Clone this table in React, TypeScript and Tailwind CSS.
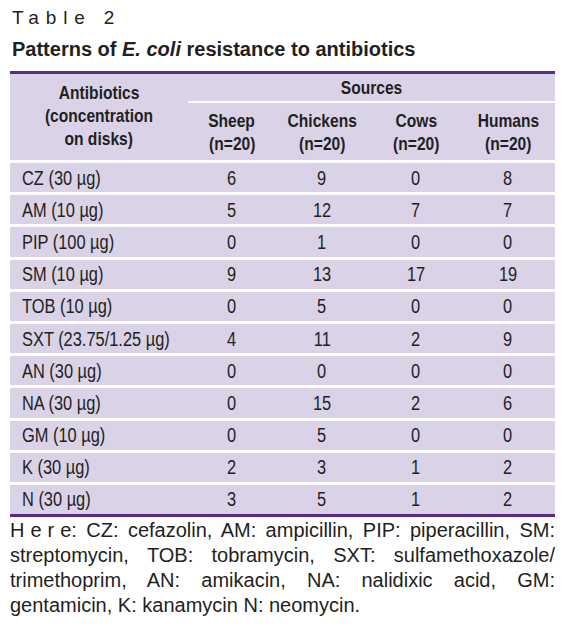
const rows: [string, string, string, string, string][] = [
  ["CZ (30 µg)", "6", "9", "0", "8"],
  ["AM (10 µg)", "5", "12", "7", "7"],
  ["PIP (100 µg)", "0", "1", "0", "0"],
  ["SM (10 µg)", "9", "13", "17", "19"],
  ["TOB (10 µg)", "0", "5", "0", "0"],
  ["SXT (23.75/1.25 µg)", "4", "11", "2", "9"],
  ["AN (30 µg)", "0", "0", "0", "0"],
  ["NA (30 µg)", "0", "15", "2", "6"],
  ["GM (10 µg)", "0", "5", "0", "0"],
  ["K (30 µg)", "2", "3", "1", "2"],
  ["N (30 µg)", "3", "5", "1", "2"],
];

const sources = ["Sheep", "Chickens", "Cows", "Humans"];
// widths of the four source columns
const colW = ["w-[88px]", "w-[92px]", "w-[96px]", "flex-1 pr-[3px]"];

// no narrow face installed, so squeeze Liberation Sans to the width of Arial Narrow
const narrow = "inline-block whitespace-nowrap scale-x-[0.82]";

export default function App() {
  return (
    <div className="w-[565px] min-h-[632px] bg-white px-[10px] pt-[6px] text-[#231f20] font-['Liberation_Sans',Arial,sans-serif]">
      <div className="h-[24px] pl-[2px] text-[19px] leading-[24px] tracking-[0.36em]">Table 2</div>
      <h2 className="mt-[7px] pl-[2px] text-[20px] font-bold leading-[24px]">
        Patterns of <i>E. coli</i> resistance to antibiotics
      </h2>

      <div className="mt-[10px] border-t-[3px] border-b-[3px] border-[#5b2c83] bg-[#dad3e7]">
        {/* header */}
        <div className="flex h-[86px] font-bold text-[19px] leading-[23px]">
          <div className="flex w-[178px] flex-col items-center justify-center pb-[4px] text-center">
            <span className={narrow}>Antibiotics</span>
            <span className={narrow}>(concentration</span>
            <span className={narrow}>on disks)</span>
          </div>
          <div className="flex flex-1 flex-col">
            <div className="flex h-[27px] items-center justify-center">
              <span className={narrow}>Sources</span>
            </div>
            <div className="h-[2px] bg-white" />
            <div className="flex flex-1">
              {sources.map((s, i) => (
                <div key={s} className={`${colW[i]} flex flex-col items-center justify-center text-center`}>
                  <span className={narrow}>{s}</span>
                  <span className={narrow}>(n=20)</span>
                </div>
              ))}
            </div>
          </div>
        </div>

        {/* body */}
        {rows.map((r) => (
          <div key={r[0]} className="flex h-[32.2px] items-center border-t-[3px] border-white text-[20px] leading-[24px]">
            <div className="w-[178px] pl-[12px]">
              <span className={`${narrow} origin-left`}>{r[0]}</span>
            </div>
            {r.slice(1).map((v, i) => (
              <div key={i} className={`${colW[i]} text-center`}>
                <span className={narrow}>{v}</span>
              </div>
            ))}
          </div>
        ))}
      </div>

      <p className="mt-[1px] text-justify text-[20px] leading-[25px]">
        <span className="tracking-[0.3em]">Her</span>e: CZ: cefazolin, AM: ampicillin, PIP: piperacillin, SM:
        streptomycin, TOB: tobramycin, SXT: sulfamethoxazole/ trimethoprim, AN: amikacin, NA: nalidixic acid,
        GM: gentamicin, K: kanamycin N: neomycin.
      </p>
    </div>
  );
}
